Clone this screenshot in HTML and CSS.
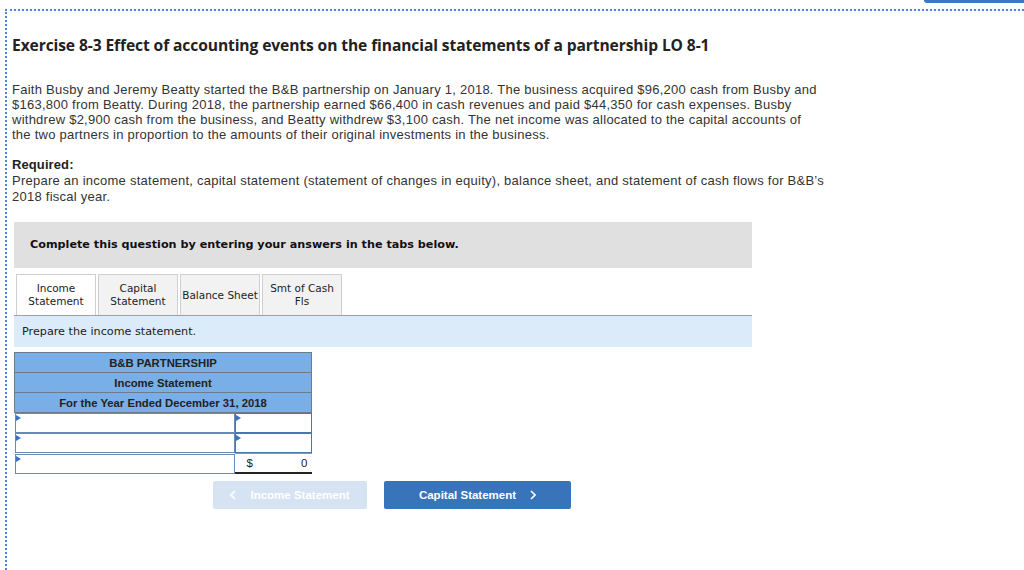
FILE: index.html
```html
<!DOCTYPE html>
<html>
<head>
<meta charset="utf-8">
<link rel="stylesheet" href="styles.css">
</head>
<body>
<div class="topbar"></div>
<div class="frame">
  <h1 class="title">Exercise 8-3 Effect of accounting events on the financial statements of a partnership LO 8-1</h1>
  <p class="para">Faith Busby and Jeremy Beatty started the B&amp;B partnership on January 1, 2018. The business acquired $96,200 cash from Busby and<br>$163,800 from Beatty. During 2018, the partnership earned $66,400 in cash revenues and paid $44,350 for cash expenses. Busby<br>withdrew $2,900 cash from the business, and Beatty withdrew $3,100 cash. The net income was allocated to the capital accounts of<br>the two partners in proportion to the amounts of their original investments in the business.</p>
  <p class="req"><b>Required:</b><br>Prepare an income statement, capital statement (statement of changes in equity), balance sheet, and statement of cash flows for B&amp;B’s<br>2018 fiscal year.</p>

  <div class="work">
    <div class="notice">Complete this question by entering your answers in the tabs below.</div>
    <div class="tabs">
      <div class="tab active">Income<br>Statement</div>
      <div class="tab">Capital<br>Statement</div>
      <div class="tab">Balance Sheet</div>
      <div class="tab">Smt of Cash<br>Fls</div>
    </div>
    <div class="prompt">Prepare the income statement.</div>
    <table class="stmt">
      <tr><th colspan="2">B&amp;B PARTNERSHIP</th></tr>
      <tr><th colspan="2">Income Statement</th></tr>
      <tr><th colspan="2">For the Year Ended December 31, 2018</th></tr>
      <tr><td class="lab"><span class="cell drop"></span></td><td class="val"><span class="cell drop"></span></td></tr>
      <tr><td class="lab"><span class="cell drop"></span></td><td class="val"><span class="cell drop"></span></td></tr>
      <tr><td class="lab"><span class="cell drop"></span></td><td class="val total"><span class="dollar">$</span><span class="num">0</span></td></tr>
    </table>
    <div class="nav">
      <button class="btn prev"><svg class="chev" width="6" height="10" viewBox="0 0 6 10"><path d="M5 1 L1 5 L5 9" fill="none" stroke="#fff" stroke-width="1.6"/></svg>Income Statement</button>
      <button class="btn next">Capital Statement<svg class="chev" width="6" height="10" viewBox="0 0 6 10"><path d="M1 1 L5 5 L1 9" fill="none" stroke="#fff" stroke-width="1.6"/></svg></button>
    </div>
  </div>
</div>
</body>
</html>
```
FILE: styles.css
```css
html, body { margin: 0; padding: 0; background: #fff; }
body { font-family: "Open Sans", "Liberation Sans", sans-serif; color: #333; position: relative; height: 570px; overflow: hidden; }
.topbar { position: absolute; top: 0; right: 0; width: 100px; height: 3px; background: #3a78bf; border-bottom-left-radius: 3px; }
.frame { margin: 9px 0 0 5px; border-top: 2px dotted #4a86cf; border-left: 2px dotted #4a86cf; padding: 24px 0 0 5px; height: 561px; box-sizing: border-box; }
.title { margin: 0; font-size: 15.6px; font-weight: 700; color: #222; line-height: 20px; letter-spacing: -0.1px; }
.para, .req { font-family: "Liberation Sans", Arial, sans-serif; font-size: 13px; letter-spacing: 0.25px; color: #333; }
.para { margin: 27px 0 0; line-height: 15px; }
.req { margin: 15px 0 0; line-height: 16px; }
.req b { color: #222; letter-spacing: 0.1px; }
.work { margin: 17px 0 0 2px; width: 738px; }
.notice { background: #e0e0e0; height: 46px; box-sizing: border-box; padding: 12px 16px; font-family: "DejaVu Sans", Verdana, sans-serif; font-weight: 700; font-size: 11.2px; line-height: 14px; color: #111; display: flex; align-items: center; }
.tabs { display: flex; gap: 2px; margin-top: 6px; padding-left: 2px; border-bottom: 1px solid #a0a0a0; }
.tab { width: 80px; height: 41px; box-sizing: border-box; border: 1px solid #cfcfcf; border-bottom: none; background: #f2f2f2; font-family: "DejaVu Sans", Verdana, sans-serif; font-size: 10.5px; line-height: 13px; color: #222; display: flex; align-items: center; justify-content: center; text-align: center; }
.tab.active { background: #fff; }
.prompt { background: #dbebf9; height: 31px; box-sizing: border-box; padding-left: 8px; display: flex; align-items: center; font-family: "DejaVu Sans", Verdana, sans-serif; font-size: 11.2px; color: #222; }
.stmt { margin-top: 5px; border-collapse: collapse; width: 298px; font-family: "Liberation Sans", Arial, sans-serif; }
.stmt th { background: #79aee6; border: 1px solid #6d7c8c; height: 19px; padding: 0; font-size: 11.3px; font-weight: 700; color: #222; text-align: center; }
.stmt td { padding: 0; height: 20px; border: none; }
.stmt td.lab { width: 220px; }
.cell { display: block; height: 20px; box-sizing: border-box; border: 1.5px solid #4a76ad; background: #fff; position: relative; }
.drop::before { content: ""; position: absolute; left: 0; top: 1px; border-left: 5px solid #3b73c4; border-top: 3px solid transparent; border-bottom: 3px solid transparent; }
.stmt td.lab .cell { border-color: #6a8ab3; }
.val.total { border-bottom: 2px solid #222; border-top: 1px solid #999; display: flex; justify-content: space-between; align-items: center; padding: 0 4px 0 12px; font-size: 11.5px; color: #222; height: 18px; }
.nav { display: flex; gap: 17px; margin: 7px 0 0 199px; }
.btn { height: 28px; border: none; border-radius: 2px; font-family: "Liberation Sans", Arial, sans-serif; font-weight: 700; font-size: 11.5px; color: #fff; display: flex; align-items: center; justify-content: center; gap: 14px; padding: 0; }
.btn.prev { width: 154px; background: #d6e3f3; }
.btn.next { width: 187px; background: #3874ba; }
.chev { display: block; }
```
